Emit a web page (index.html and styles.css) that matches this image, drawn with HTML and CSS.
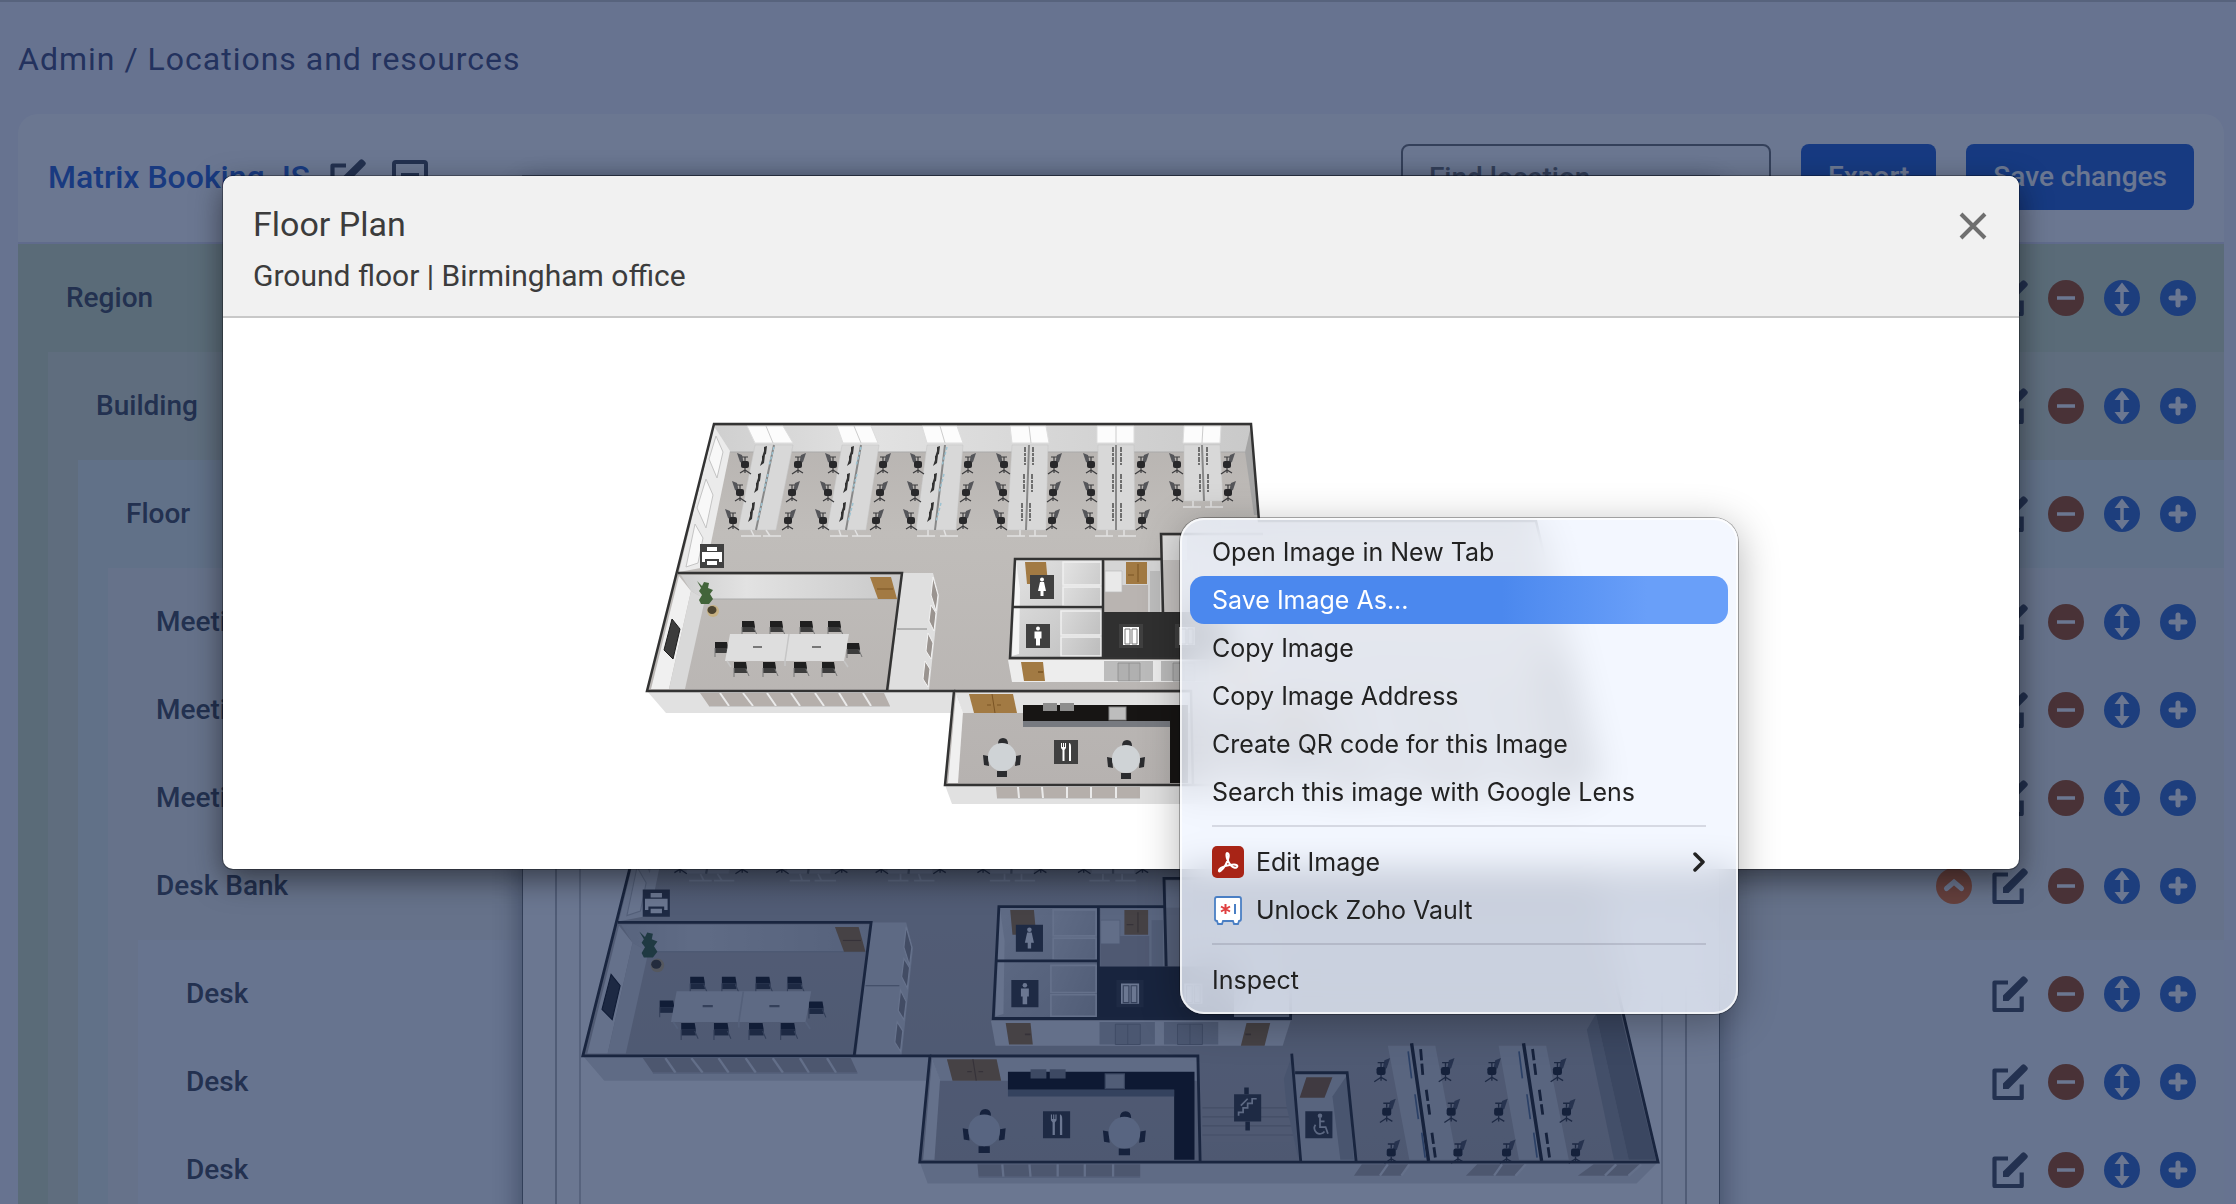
FILE: index.html
```html
<!DOCTYPE html>
<html lang="en">
<head>
<meta charset="utf-8">
<title>Locations and resources</title>
<link rel="stylesheet" href="styles.css">
</head>
<body>
<svg class="sprite" aria-hidden="true">
  <symbol id="i-edit" viewBox="0 0 36 36"><path d="M16 6.500H2.500V34H29.700V20.500" fill="none" stroke="#4b505c" stroke-width="4.200" stroke-linejoin="round"/><path d="M11 25v-5.500L29.800 1Q31.500-.6 33.200 1L35.200 3Q36.600 4.600 35 6.200L16.500 25Z" fill="#4b505c"/></symbol>
  <symbol id="i-box" viewBox="0 0 36 36"><rect x="2" y="3" width="32" height="31" rx="2" fill="none" stroke="#4b505c" stroke-width="4"/><path d="M9 14H27V17L18 26L9 17Z" fill="#4b505c"/></symbol>
  <symbol id="i-minus" viewBox="0 0 36 36"><circle cx="18" cy="18" r="18" fill="#ab5420"/><path d="M9 18H27" stroke="#fff" stroke-width="3.500"/></symbol>
  <symbol id="i-move" viewBox="0 0 36 36"><circle cx="18" cy="18" r="18" fill="#3e70cc"/><path d="M18 8V28" stroke="#fff" stroke-width="3.500"/><path d="M18 2.500L25.500 12H10.500ZM18 33.500L25.500 24H10.500Z" fill="#fff"/></symbol>
  <symbol id="i-plus" viewBox="0 0 36 36"><circle cx="18" cy="18" r="18" fill="#3e70cc"/><path d="M11 18H25M18 11V25" stroke="#fff" stroke-width="5" stroke-linecap="round"/></symbol>
  <symbol id="i-up" viewBox="0 0 36 36"><circle cx="18" cy="18" r="18" fill="#f0762f"/><path d="M10.500 20.500L18 14L25.500 20.500" fill="none" stroke="#fff" stroke-width="5" stroke-linecap="round"/></symbol>

  <!-- chairs, drawn round their own centre -->
  <g id="ch">
    <path d="M-8-9L-3-7L-1 2L-5 0Z" fill="#55565a"/><rect x="-4" y="-1" width="8" height="7" rx="2" fill="#28282a"/><path d="M-3-5h6M0-5v4M0 6v5M-5 11L0 8L6 12" stroke="#3c3c3e" stroke-width="1.200" fill="none"/>
  </g>
  <g id="cr"><use href="#ch" transform="scale(-1 1)"/></g>
  <g id="mc"><path d="M-6-6H6L7 0H-6Z" fill="#1f1f1f"/><path d="M-6 0H7V5H-6Z" fill="#3c3c3c"/><path d="M-6 0V9M6 1l3 7" stroke="#777" fill="none"/></g>
  <g id="mon"><path d="M0-9l3-1-1 8-4 3 2-6zM-2 0l3-1-1 8-4 3 2-6z" fill="#333"/><path d="M10-9L5 10" stroke="#9cc3d2" stroke-width="1.500" stroke-dasharray="3 2"/></g>
  <g id="row"><path d="M0-9v18M8-9v18" stroke="#555" stroke-width="1.600" stroke-dasharray="5 1 3 1" fill="none"/></g>

  <symbol id="plan" viewBox="640 418 964 394">
    <defs>
      <linearGradient id="fl" x1="0" y1="0" x2="0" y2="1"><stop offset="0" stop-color="#b7b3b0"/><stop offset=".3" stop-color="#c0bdba"/><stop offset="1" stop-color="#b6b2b0"/></linearGradient>
      <linearGradient id="wl" x1="0" y1="0" x2="1" y2="0"><stop offset="0" stop-color="#cfcfcf"/><stop offset=".3" stop-color="#e2e2e2"/><stop offset="1" stop-color="#c9c9c9"/></linearGradient>
      <linearGradient id="cell" x1="0" y1="0" x2="1" y2="1"><stop offset="0" stop-color="#e4e4e4"/><stop offset="1" stop-color="#bcbcbc"/></linearGradient>
    </defs>
    <!-- outer faces -->
    <path d="M646 692H953L950 714H665Z" fill="#e1e1e1"/>
    <path d="M944 786H1597L1578 805H951Z" fill="#e1e1e1"/>
    <path d="M699 694H883L889 707H708ZM995 788H1139V799H996Z" fill="#b5afab"/>
    <path d="M719 694l9 13M742 694l10 13M766 694l9 13M790 694l9 13M814 694l9 13M838 694l8 13M862 694l8 13M1017 788l1 11M1041 788l1 11M1066 788v11M1090 788v11M1115 788v11" stroke="#eaeaea" stroke-width="2"/>
    <path d="M708 707.500H889M996 799.500H1139" stroke="#c9c9c9"/>
    <path d="M1335 788H1377L1370 798H1328ZM1437 788H1480L1470 798H1427ZM1540 788H1582L1570 798H1526Z" fill="#b5afab"/>
    <path d="M1358 788l-7 10M1459 788l-7 10M1560 788l-10 10M1377 788l-7 10M1480 788l-9 10M1582 788l-11 10" stroke="#eee" stroke-width="2"/>
    <!-- floor and inner walls -->
    <path d="M713 425H1250L1258 522H1535L1597 786H944L953 692H646Z" fill="url(#fl)"/>
    <path d="M713 427H1250L1245 453H728Z" fill="url(#wl)"/>
    <path d="M728 453H1244" stroke="#aaa"/>
    <path d="M713 427L729 452L705 568L678 573Z" fill="#ebebeb"/>
    <path d="M715 437l7 16-6 26-8-19zM705 480l7 16-7 33-9-20zM694 525l8 14-5 25-12 4z" fill="#f8f8f8" stroke="#c4c4c4"/>
    <path d="M1250 427L1244 453L1253 516H1258Z" fill="#a5a5a5"/>
    <path d="M746 427H782L792 444H754ZM836 427H870L877 444H842ZM921 427H956L962 444H926ZM1009 427H1045L1048 444H1011ZM1096 427H1133V444H1096ZM1183 427H1220L1219 444H1182Z" fill="#fcfcfc" stroke="#ddd"/>
    <path d="M765 427l7 17M853 427l7 17M939 427l5 17M1028 427l2 17M1115 427v17M1202 427l-1 17" stroke="#ccc"/>
    <!-- desk banks -->
    <g fill="#d8d8d8" stroke="#c4c4c4" stroke-width=".5">
      <path d="M754 446H792L775 531H737ZM841 446H878L865 531H826ZM926 446H962L955 531H915ZM1011 446H1047L1045 531H1006ZM1097 446H1133L1134 531H1096ZM1183 446H1219L1222 502H1183Z"/>
    </g>
    <path d="M750 531l3 6m-13 0h20M765 531l4 6m-7 0h18M838 531l2 6m-11 0h18M854 531l3 6m-6 0h19M927 531v6m-11 0h18M943 531l2 6m-6 0h18M1019 531v6m-13 0h18M1034 531v6m-6 0h18M1106 531v6m-12 0h18M1123 531v6m-6 0h18M1192 502v6m-10 0h18M1210 502v6m-6 0h18" stroke="#e2e2e2" stroke-width="1.500" fill="none"/>
    <path d="M773 446L755 531M860 446L845 531M944 446L934 531M1028 446L1025 531M1115 446V531M1201 446L1203 502" stroke="#888" stroke-width="2"/>
    <use href="#mon" x="763" y="457"/><use href="#mon" x="757" y="484"/><use href="#mon" x="751" y="513"/>
    <use href="#mon" x="850" y="457"/><use href="#mon" x="846" y="484"/><use href="#mon" x="842" y="513"/>
    <use href="#mon" x="936" y="457"/><use href="#mon" x="933" y="484"/><use href="#mon" x="930" y="513"/>
    <use href="#row" x="1024" y="457"/><use href="#row" x="1023" y="484"/><use href="#row" x="1021" y="513"/>
    <use href="#row" x="1112" y="457"/><use href="#row" x="1112" y="484"/><use href="#row" x="1112" y="513"/>
    <use href="#row" x="1198" y="457"/><use href="#row" x="1199" y="484"/>
    <use href="#ch" x="744" y="463"/><use href="#ch" x="739" y="491"/><use href="#ch" x="732" y="519"/>
    <use href="#cr" x="797" y="463"/><use href="#cr" x="791" y="491"/><use href="#cr" x="787" y="519"/>
    <use href="#ch" x="832" y="463"/><use href="#ch" x="827" y="491"/><use href="#ch" x="822" y="519"/>
    <use href="#cr" x="882" y="463"/><use href="#cr" x="879" y="491"/><use href="#cr" x="875" y="519"/>
    <use href="#ch" x="917" y="463"/><use href="#ch" x="914" y="491"/><use href="#ch" x="910" y="519"/>
    <use href="#cr" x="967" y="463"/><use href="#cr" x="965" y="491"/><use href="#cr" x="962" y="519"/>
    <use href="#ch" x="1003" y="463"/><use href="#ch" x="1002" y="491"/><use href="#ch" x="1000" y="519"/>
    <use href="#cr" x="1053" y="463"/><use href="#cr" x="1052" y="491"/><use href="#cr" x="1051" y="519"/>
    <use href="#ch" x="1090" y="463"/><use href="#ch" x="1090" y="491"/><use href="#ch" x="1089" y="519"/>
    <use href="#cr" x="1140" y="463"/><use href="#cr" x="1140" y="491"/><use href="#cr" x="1141" y="519"/>
    <use href="#ch" x="1176" y="463"/><use href="#ch" x="1176" y="491"/>
    <use href="#cr" x="1226" y="463"/><use href="#cr" x="1227" y="491"/>
    <!-- meeting room -->
    <path d="M680 576H899L896 600H704L690 592Z" fill="url(#wl)"/>
    <path d="M700 600H896" stroke="#aaa"/>
    <path d="M678 577L690 592L668 690H650Z" fill="#f0f0f0"/>
    <path d="M690 592L704 600L684 690H668Z" fill="#d9d9d9"/>
    <path d="M671 620L679 630L672 660L663 651Z" fill="#3c3c3c" stroke="#1c1c1c"/>
    <path d="M696 582l5 5 2-4 5 1-1 5 5 2-3 4 3 5-4 5h-8l-2-4 3-5-3-4 2-3z" fill="#42643a"/>
    <ellipse cx="712" cy="612" rx="6" ry="6" fill="#c7b183"/><ellipse cx="711" cy="611" rx="4.500" ry="4" fill="#4d4430"/>
    <path d="M869 578H890L896 600H877Z" fill="#a27a43"/><path d="M876 590h16" stroke="#7a5424"/>
    <use href="#mc" x="747" y="628"/><use href="#mc" x="775" y="628"/><use href="#mc" x="805" y="628"/><use href="#mc" x="833" y="628"/>
    <use href="#mc" x="720" y="649"/><use href="#mc" x="852" y="650"/>
    <path d="M729 635H848L843 662H724Z" fill="#dedede"/><path d="M726 662l4 6M784 662v5M843 662l4 6M788 635l-4 27" stroke="#c6c6c6" stroke-width="1.500"/>
    <path d="M752 648h9M811 648h9" stroke="#777" stroke-width="2"/>
    <use href="#mc" x="739" y="669"/><use href="#mc" x="768" y="669"/><use href="#mc" x="799" y="669"/><use href="#mc" x="827" y="669"/>
    <path d="M901 574H932L938 597L928 691H888Z" fill="#dfdfdf"/>
    <path d="M932 578l5 18-2 16-5-16zM930 606l5 8-2 18-5-10zM927 634l5 10-2 16-5-8zM924 662l5 8-2 18-5-8z" fill="#9a9490" stroke="#f4f4f4"/>
    <path d="M896 630H926" stroke="#888"/>
    <!-- rest rooms and lifts -->
    <path d="M1014 560H1102V659H1009Z" fill="url(#cell)"/>
    <path d="M1015 563L1011 657L1018 655L1019 590Z" fill="#f5f5f5"/>
    <path d="M1062 563H1100V586H1062ZM1062 588H1100V607H1062ZM1060 612H1100V636H1060ZM1060 638H1100V657H1060Z" fill="url(#cell)" stroke="#efefef" stroke-width="1.500"/>
    <path d="M1104 562H1160V613H1104Z" fill="#d5d5d5"/><path d="M1104 586H1147V613H1104Z" fill="#b9b4b1"/>
    <path d="M1104 572h17v21h-17z" fill="#e9e9e9" stroke="#bbb" stroke-width=".7"/>
    <path d="M1149 572h10v41h-10z" fill="#bdbdbd"/>
    <path d="M1162 537H1262V613H1162Z" fill="#c8c5c3"/><path d="M1162 537h24v24h-24z" fill="#dedede"/>
    <path d="M1024 563h21l2 22h-21zM1125 563h21v22h-21z" fill="#a27a43"/><path d="M1127 576h6M1137 565v18" stroke="#7a5424"/>
    <path d="M1101 613H1222V659H1101Z" fill="#303030"/>
    <path d="M1222 613H1272V659H1222Z" fill="#cfcfcf"/>
    <path d="M1007 661H1272L1265 683H1011Z" fill="#ededed"/>
    <path d="M1020 663H1042L1044 682H1023ZM1233 663H1254L1249 683H1228Z" fill="#a27a43"/><path d="M1037 673h5M1232 673h5" stroke="#7a5424" stroke-width="1.500"/>
    <path d="M1103 662H1152V682H1103ZM1160 662H1208V682H1160Z" fill="#bcbcbc"/><path d="M1117 664h22v18h-22zM1128 664v18M1172 664h22v18h-22zM1183 664v18" fill="#b0b0b0" stroke="#8d8d8d" stroke-width=".8"/>
    <!-- kitchen -->
    <path d="M955 694H1189V714H962Z" fill="#e2e2e2"/>
    <path d="M955 694L962 713L957 784H947Z" fill="#f0f0f0"/>
    <path d="M968 695H1012L1016 714H973Z" fill="#a27a43"/><path d="M991 695l3 19M986 706h4M996 706h4" stroke="#7a5424"/>
    <path d="M1022 706H1187V784H1169V722H1022Z" fill="#171514"/>
    <path d="M1022 722H1169V728H1022Z" fill="#777a80"/>
    <path d="M1042 704h14v8h-14zM1059 704h14v8h-14z" fill="#8d8d8d"/><rect x="1108" y="708" width="17" height="13" fill="#bdbdbd" stroke="#888"/>
    <g fill="#2b2c2f">
      <path d="M997 745q0-6 5-6t5 6zM996 772h10v6h-10zM982 756l5 1 1 10-5-1zM1020 756l-5 1-1 10 5-1z"/>
      <path d="M1121 747q0-6 5-6t5 6zM1120 774h10v6h-10zM1106 758l5 1 1 10-5-1zM1144 758l-5 1-1 10 5-1z"/>
    </g>
    <circle cx="1001" cy="758" r="14" fill="#cfd3d6"/><circle cx="1125" cy="760" r="14" fill="#cfd3d6"/>
    <!-- stairs and accessible room -->
    <path d="M1194 723H1272V768H1194Z" fill="#bab5b2"/><path d="M1194 738H1274M1194 746H1274M1194 754H1275M1194 762H1276" stroke="#9b9693"/>
    <path d="M1273 692L1266 712L1268 735L1279 784Z" fill="#a9a9a9"/>
    <path d="M1276 707H1322L1329 786H1280Z" fill="#cfcfcf"/><path d="M1322 709L1309 728L1316 784H1328Z" fill="#aaa"/>
    <path d="M1286 711H1309L1302 729H1280Z" fill="#946839"/>
    <path d="M1233 720v6M1234 750v8" stroke="#333" stroke-width="4"/>
    <!-- right wing -->
    <path d="M1534 669L1542 655L1571 784H1558Z" fill="#9b9b9b"/><path d="M1542 655H1564L1595 784H1571Z" fill="#888"/>
    <path d="M1358 683H1400L1419 784H1377ZM1456 683H1498L1518 784H1474Z" fill="#d2d2d2"/>
    <path d="M1379 681L1394 785M1478 681L1494 785" stroke="#2b2b2b" stroke-width="3"/>
    <path d="M1387 686l2 24M1392 722l3 22M1397 760l3 22M1486 686l3 24M1492 722l3 22M1498 760l3 22" stroke="#2b2b2b" stroke-width="2.500" stroke-dasharray="10 3"/>
    <path d="M1376 688l3 24M1382 726l3 22M1388 760l3 22M1474 688l3 24M1481 726l3 22M1487 760l3 22" stroke="#5f7694" stroke-width="1.500"/>
    <use href="#cr" x="1352" y="703"/><use href="#cr" x="1357" y="739"/><use href="#cr" x="1361" y="775"/>
    <use href="#cr" x="1409" y="703"/><use href="#cr" x="1414" y="739"/><use href="#cr" x="1420" y="775"/>
    <use href="#cr" x="1450" y="703"/><use href="#cr" x="1456" y="739"/><use href="#cr" x="1463" y="775"/>
    <use href="#cr" x="1508" y="703"/><use href="#cr" x="1516" y="739"/><use href="#cr" x="1524" y="775"/>
    <!-- wall tops -->
    <g fill="none" stroke="#333" stroke-width="2.500">
      <path d="M713 425H1250L1258 522H1535L1597 786H944L953 692H646Z"/>
      <path d="M677 574H901L886 692M953 692H1190L1192 786M1160 560H1014L1009 659H1272V613M1011 608H1102M1102 560V659M1262 535H1160L1162 613M1273 690L1281 786M1276 707H1322L1330 786"/>
    </g>
    <!-- signs -->
    <g fill="#404040"><path d="M699 545h24v24h-24zM1029 576h24v24h-24zM1025 625h24v24h-24zM1118 625h24v24h-24zM1174 625h24v24h-24zM1053 741h24v24h-24zM1222 726h24v24h-24zM1285 741h24v24h-24z"/></g>
    <g fill="#fff">
      <path d="M706 548h10v4h-10zM701 553h20v10h-3v-3h-14v3h-3zM706 562h10v4h-10z"/>
      <circle cx="1041" cy="580.500" r="2"/><path d="M1039 583h4l2 9h-2.500v5h-3v-5h-2.500z"/>
      <circle cx="1037" cy="629.500" r="2"/><path d="M1033.500 632.500h7v7h-1.500v7h-4v-7h-1.500z"/>
      <path d="M1122 628h16v18h-16zM1178 628h16v18h-16z"/>
      <path d="M1060 744h1v4h1v-4h1v4h1v-4h1v5l-1.500 2v11h-2v-11l-1.500-2zM1068 744q2 0 2 4v14h-2z"/>
    </g>
    <path d="M1124 630h5v15h-5zM1131 630h5v15h-5zM1180 630h5v15h-5zM1187 630h5v15h-5z" fill="none" stroke="#777"/>
    <g fill="none" stroke="#ddd" stroke-width="1.500"><path d="M1226 745v-3h4v-4h4v-4h4v-4h4M1228 736l6-6"/><path d="M1298 747v8h5l2 6M1298 750h4M1294 753a5 5 0 1 0 8 6"/></g>
    <circle cx="1298" cy="745" r="2" fill="#ddd"/>
  </symbol>
</svg>

<main class="page">
  <h1 class="crumbs">Admin / Locations and resources</h1>
  <section class="card">
    <header class="bar">
      <a class="org" href="#">Matrix Booking JS</a>
      <div class="org-tools">
        <button class="ico" aria-label="Edit organisation"><svg><use href="#i-edit"/></svg></button>
        <button class="ico" aria-label="Collapse organisation"><svg><use href="#i-box"/></svg></button>
      </div>
      <input class="find" type="text" placeholder="Find location" aria-label="Find location">
      <button class="btn">Export</button>
      <button class="btn">Save changes</button>
    </header>
    <div class="level region">
      <div class="row"><span>Region</span><button class="ico" aria-label="Edit"><svg><use href="#i-edit"/></svg></button><button class="ico" aria-label="Remove"><svg><use href="#i-minus"/></svg></button><button class="ico" aria-label="Move"><svg><use href="#i-move"/></svg></button><button class="ico" aria-label="Add"><svg><use href="#i-plus"/></svg></button></div>
      <div class="level building">
        <div class="row"><span>Building</span><button class="ico" aria-label="Edit"><svg><use href="#i-edit"/></svg></button><button class="ico" aria-label="Remove"><svg><use href="#i-minus"/></svg></button><button class="ico" aria-label="Move"><svg><use href="#i-move"/></svg></button><button class="ico" aria-label="Add"><svg><use href="#i-plus"/></svg></button></div>
        <div class="level floor">
          <div class="row"><span>Floor</span><button class="ico" aria-label="Edit"><svg><use href="#i-edit"/></svg></button><button class="ico" aria-label="Remove"><svg><use href="#i-minus"/></svg></button><button class="ico" aria-label="Move"><svg><use href="#i-move"/></svg></button><button class="ico" aria-label="Add"><svg><use href="#i-plus"/></svg></button></div>
          <div class="level space">
            <div class="row"><span>Meeting Room</span><button class="ico" aria-label="Edit"><svg><use href="#i-edit"/></svg></button><button class="ico" aria-label="Remove"><svg><use href="#i-minus"/></svg></button><button class="ico" aria-label="Move"><svg><use href="#i-move"/></svg></button><button class="ico" aria-label="Add"><svg><use href="#i-plus"/></svg></button></div>
            <div class="row"><span>Meeting Room</span><button class="ico" aria-label="Edit"><svg><use href="#i-edit"/></svg></button><button class="ico" aria-label="Remove"><svg><use href="#i-minus"/></svg></button><button class="ico" aria-label="Move"><svg><use href="#i-move"/></svg></button><button class="ico" aria-label="Add"><svg><use href="#i-plus"/></svg></button></div>
            <div class="row"><span>Meeting Room</span><button class="ico" aria-label="Edit"><svg><use href="#i-edit"/></svg></button><button class="ico" aria-label="Remove"><svg><use href="#i-minus"/></svg></button><button class="ico" aria-label="Move"><svg><use href="#i-move"/></svg></button><button class="ico" aria-label="Add"><svg><use href="#i-plus"/></svg></button></div>
            <div class="row"><span>Desk Bank</span><button class="ico" aria-label="Collapse"><svg><use href="#i-up"/></svg></button><button class="ico" aria-label="Edit"><svg><use href="#i-edit"/></svg></button><button class="ico" aria-label="Remove"><svg><use href="#i-minus"/></svg></button><button class="ico" aria-label="Move"><svg><use href="#i-move"/></svg></button><button class="ico" aria-label="Add"><svg><use href="#i-plus"/></svg></button></div>
            <div class="level desk">
              <div class="row"><span>Desk</span><button class="ico" aria-label="Edit"><svg><use href="#i-edit"/></svg></button><button class="ico" aria-label="Remove"><svg><use href="#i-minus"/></svg></button><button class="ico" aria-label="Move"><svg><use href="#i-move"/></svg></button><button class="ico" aria-label="Add"><svg><use href="#i-plus"/></svg></button></div>
              <div class="row"><span>Desk</span><button class="ico" aria-label="Edit"><svg><use href="#i-edit"/></svg></button><button class="ico" aria-label="Remove"><svg><use href="#i-minus"/></svg></button><button class="ico" aria-label="Move"><svg><use href="#i-move"/></svg></button><button class="ico" aria-label="Add"><svg><use href="#i-plus"/></svg></button></div>
              <div class="row"><span>Desk</span><button class="ico" aria-label="Edit"><svg><use href="#i-edit"/></svg></button><button class="ico" aria-label="Remove"><svg><use href="#i-minus"/></svg></button><button class="ico" aria-label="Move"><svg><use href="#i-move"/></svg></button><button class="ico" aria-label="Add"><svg><use href="#i-plus"/></svg></button></div>
            </div>
          </div>
        </div>
      </div>
    </div>
  </section>
</main>

<!-- location form, behind the floor plan dialog -->
<div class="layer">
  <div class="form-dialog">
    <div class="frame"><div class="preview"><svg class="plan-img" role="img" aria-label="Floor plan preview"><use href="#plan"/></svg></div></div>
  </div>
</div>

<div class="layer dim">
  <section class="dialog" role="dialog" aria-labelledby="dlg-title">
    <header class="dialog-head">
      <div>
        <h2 id="dlg-title">Floor Plan</h2>
        <p>Ground floor | Birmingham office</p>
      </div>
      <button class="close" aria-label="Close"><svg viewBox="0 0 28 28"><path d="M2 2L26 26M26 2L2 26" stroke="#6f6f6f" stroke-width="4"/></svg></button>
    </header>
    <div class="dialog-body"><svg class="plan-img" role="img" aria-label="Ground floor plan"><use href="#plan"/></svg></div>
  </section>
</div>

<div class="menu" role="menu">
  <button role="menuitem">Open Image in New Tab</button>
  <button role="menuitem" class="active">Save Image As...</button>
  <button role="menuitem">Copy Image</button>
  <button role="menuitem">Copy Image Address</button>
  <button role="menuitem">Create QR code for this Image</button>
  <button role="menuitem">Search this image with Google Lens</button>
  <hr>
  <button role="menuitem"><svg class="app" viewBox="0 0 32 32"><rect width="32" height="32" rx="5" fill="#a82416"/><path d="M15 7C18 7 17 13 13.500 19S6 27 7 24S17 18.500 22 18.500S26 22.500 22 21.500S14 12 14.500 8Q14.700 7 15 7Z" fill="none" stroke="#fff" stroke-width="2"/></svg>Edit Image<svg class="arrow" viewBox="0 0 14 20"><path d="M3 2L11 10L3 18" fill="none" stroke="#222" stroke-width="3.500" stroke-linecap="round" stroke-linejoin="round"/></svg></button>
  <button role="menuitem"><svg class="app" viewBox="0 0 32 32"><path d="M5 3H27Q29 3 29 5V25Q29 27 27 27L26 30H22L21 27H11L10 30H6L5 27Q3 27 3 25V5Q3 3 5 3Z" fill="#fff" stroke="#4a7fc4" stroke-width="1.800"/><path d="M13.500 10v10M9 12.500l9 5M18 12.500l-9 5" stroke="#e04040" stroke-width="2"/><path d="M23 10V20" stroke="#4a7fc4" stroke-width="2"/></svg>Unlock Zoho Vault</button>
  <hr>
  <button role="menuitem">Inspect</button>
</div>
</body>
</html>
```
FILE: styles.css
```css
* { box-sizing: border-box; }
html, body { height: 100%; }
body {
  margin: 0;
  overflow: hidden;
  background: #f6f5fc;
  color: #4b505c;
  font: 500 28px/36px Roboto, "Liberation Sans", sans-serif;
}
button { font: inherit; color: inherit; border: 0; background: none; padding: 0; margin: 0; }
.sprite { position: absolute; width: 0; height: 0; }

/* page */
.page { padding: 0 12px 0 18px; border-top: 2px solid #ccc; }
.crumbs {
  margin: 0;
  padding: 37px 0 35px;
  font-size: 32px;
  font-weight: 400;
  line-height: 40px;
  letter-spacing: 1px;
  color: #4d547f;
}
.card { background: #fff; border-radius: 20px 20px 0 0; }
.bar {
  display: flex;
  align-items: center;
  gap: 30px;
  padding: 30px 30px 32px;
  border-bottom: 2px solid #e4e2f2;
}
.org { color: #3267d4; font-size: 32px; text-decoration: none; }
.org-tools { display: flex; gap: 26px; margin-left: -10px; }
.ico { width: 36px; height: 36px; flex: none; }
.ico svg { display: block; width: 36px; height: 36px; }
.find {
  width: 370px;
  height: 66px;
  margin-left: auto;
  padding: 0 26px;
  border: 2px solid #777;
  border-radius: 8px;
  background: none;
  font: inherit;
}
.find::placeholder { color: #777; opacity: 1; }
.btn { height: 66px; padding: 0 27px; border-radius: 8px; background: #2d67d6; color: #fff; }

/* location tree */
.level { padding-top: 10px; }
.level .level { margin: 10px 0 0 30px; }
.region { background: #d5e2c1; }
.building { background: #e0e7cf; }
.floor { background: #e6efe8; }
.space { background: #f3f3ee; }
.desk { background: #f5f7f9; }
.row { display: flex; align-items: center; gap: 20px; height: 88px; padding: 0 28px 0 48px; }
.row span { margin-right: auto; }

/* dialogs */
.layer {
  position: fixed;
  inset: 0;
  display: flex;
  justify-content: center;
  align-items: flex-start;
  padding: 176px 217px 0 223px;
  overflow: hidden;
}
.dim { background: rgba(8, 28, 72, 0.6); }
.form-dialog {
  width: 1196px;
  padding: 180px 32px 0;
  background: #fff;
  box-shadow: 0 0 0 1px rgba(0, 0, 0, 0.4), 0 10px 30px rgba(0, 0, 0, 0.5);
}
.frame { border: solid #bbb; border-width: 0 2px; padding: 0 22px; }
.preview { display: flex; padding: 390px 0 40px; border: solid #ccc; border-width: 0 2px; }
.preview .plan-img { flex: 1; margin: 0 -5px; aspect-ratio: 964 / 394; }
.dialog {
  width: 100%;
  border-radius: 10px;
  background: #fff;
  overflow: hidden;
  box-shadow: 0 0 0 1px rgba(0, 0, 0, 0.3), 0 10px 30px rgba(0, 0, 0, 0.5);
}
.dialog-head {
  display: flex;
  justify-content: space-between;
  align-items: flex-start;
  padding: 28px 32px 20px 30px;
  background: #f1f1f1;
  border-bottom: 2px solid #c8c8c8;
  color: #3c3c3c;
}
.dialog-head h2 { margin: 0 0 12px; font-size: 34px; line-height: 40px; font-weight: 400; }
.dialog-head p { margin: 0; font-size: 30px; line-height: 40px; font-weight: 400; }
.close { margin: 8px 0; width: 28px; height: 28px; }
.close svg { display: block; width: 28px; height: 28px; }
.dialog-body { display: flex; justify-content: center; padding: 99px 0 58px 4px; }
.dialog-body .plan-img { width: 964px; height: 394px; }

/* context menu */
.menu {
  position: fixed;
  left: 1180px;
  top: 518px;
  width: 558px;
  padding: 10px;
  border-radius: 24px;
  background: rgba(240, 244, 255, 0.77);
  backdrop-filter: blur(18px);
  box-shadow: inset 0 0 0 2px rgba(255, 255, 255, 0.7), 0 0 0 1px rgba(0, 0, 0, 0.3), 0 8px 40px rgba(0, 0, 0, 0.3);
  color: #222;
  font: 400 25px/48px Inter, "Liberation Sans", sans-serif;
}
.menu button { display: flex; align-items: center; gap: 12px; width: 100%; height: 48px; padding: 0 22px; }
.menu .active { border-radius: 14px; background: linear-gradient(90deg, #4b88ee 0 58%, #699ff9 85%); color: #fff; }
.menu hr { margin: 9px 22px 11px; border: 0; height: 2px; background: rgba(60, 60, 80, 0.16); }
.app { width: 32px; height: 32px; }
.arrow { width: 14px; height: 20px; margin-left: auto; }
```
